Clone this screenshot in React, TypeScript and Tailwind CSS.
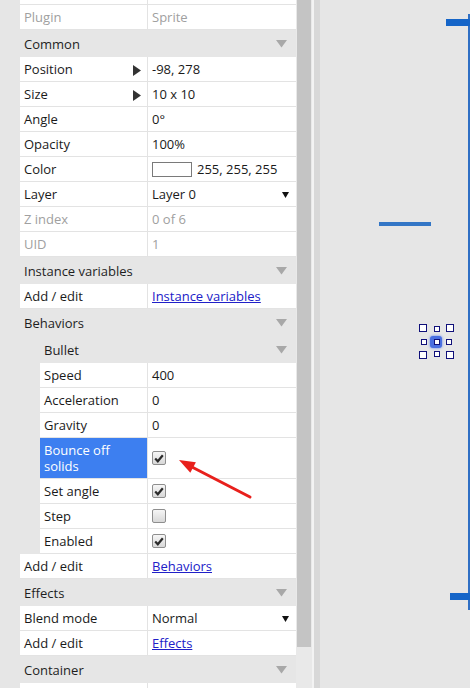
import React from "react";

const font = { fontFamily: '"Open Sans", "Noto Sans", sans-serif' };

function HeaderArrow() {
  return (
    <svg width="11" height="8" viewBox="0 0 11 8" className="shrink-0">
      <polygon points="0,0 11,0 5.5,7.5" fill="#a8a8a8" />
    </svg>
  );
}

function PlayArrow() {
  return (
    <svg width="8" height="11" viewBox="0 0 8 11" className="shrink-0">
      <polygon points="0,0 8,5.5 0,11" fill="#333" />
    </svg>
  );
}

function DropArrow() {
  return (
    <svg width="7" height="6" viewBox="0 0 7 6" className="shrink-0">
      <polygon points="0,0 7,0 3.5,6" fill="#111" />
    </svg>
  );
}

function Check({ checked }: { checked: boolean }) {
  return (
    <div className="w-[14px] h-[14px] rounded-[2px] border border-[#8e8e8e] bg-gradient-to-b from-[#f6f6f6] to-[#d8d8d8] flex items-center justify-center">
      {checked && (
        <svg width="10" height="9" viewBox="0 0 10 9">
          <path d="M1.2 4.6 L3.8 7.3 L8.8 1.2" stroke="#2a2a2a" strokeWidth="2.2" fill="none" />
        </svg>
      )}
    </div>
  );
}

function Header({ label, indent = false }: { label: string; indent?: boolean }) {
  return (
    <div className={`h-[27px] flex items-center justify-between pr-[9px] bg-[#e6e6e6] ${indent ? "pl-[24px]" : "pl-[4px]"}`}>
      <span className="text-[13px] text-[#1e1e1e] pt-[2px]">{label}</span>
      <HeaderArrow />
    </div>
  );
}

function Row({
  name,
  children,
  indent = false,
  muted = false,
  arrow = false,
  h = "h-[25px]",
  selected = false,
}: {
  name: React.ReactNode;
  children?: React.ReactNode;
  indent?: boolean;
  muted?: boolean;
  arrow?: boolean;
  h?: string;
  selected?: boolean;
}) {
  return (
    <div className={`flex ${h} ${indent ? "ml-[20px]" : ""} bg-white border-b border-[#e3e3e3]`}>
      <div
        className={`${indent ? "w-[108px]" : "w-[128px]"} shrink-0 border-r border-[#e3e3e3] flex items-center justify-between pl-[4px] pr-[6px] ${
          selected ? "bg-[#3d7ff0] text-white leading-[16px]" : muted ? "text-[#a0a0a0] pt-[2px]" : "text-[#1a1a1a] pt-[2px]"
        }`}
      >
        <span className="text-[13px]">{name}</span>
        {arrow && <PlayArrow />}
      </div>
      <div className={`flex-1 flex items-center pl-[4px] pr-[7px] text-[13px] pt-[2px] ${muted ? "text-[#a0a0a0]" : "text-[#1a1a1a]"}`}>
        {children}
      </div>
    </div>
  );
}

function Link({ children }: { children: React.ReactNode }) {
  return <span className="text-[#2020c8] underline">{children}</span>;
}

function Handle({ x, y, s }: { x: number; y: number; s: number }) {
  return (
    <div
      className="absolute border-[1.5px] border-[#10107a] bg-white"
      style={{ left: x, top: y, width: s, height: s }}
    />
  );
}

export default function App() {
  return (
    <div className="w-[470px] h-[688px] overflow-hidden flex bg-[#e6e6e6] relative" style={font}>
      {/* property panel */}
      <div className="w-[296px] shrink-0 pl-[20px] bg-[#e6e6e6] overflow-hidden">
        <div className="-mt-[20px]">
          <Row name="" />
          <Row name="Plugin" muted>
            Sprite
          </Row>
          <Header label="Common" />
          <Row name="Position" arrow>
            -98, 278
          </Row>
          <Row name="Size" arrow>
            10 x 10
          </Row>
          <Row name="Angle">0°</Row>
          <Row name="Opacity">100%</Row>
          <Row name="Color">
            <div className="w-[40px] h-[15px] border border-[#7a7a7a] bg-white mr-[5px] -mt-[2px]" />
            255, 255, 255
          </Row>
          <Row name="Layer">
            <div className="flex-1 flex items-center justify-between">
              <span>Layer 0</span>
              <DropArrow />
            </div>
          </Row>
          <Row name="Z index" muted>
            0 of 6
          </Row>
          <Row name="UID" muted>
            1
          </Row>
          <Header label="Instance variables" />
          <Row name="Add / edit">
            <Link>Instance variables</Link>
          </Row>
          <Header label="Behaviors" />
          <Header label="Bullet" indent />
          <Row name="Speed" indent>
            400
          </Row>
          <Row name="Acceleration" indent>
            0
          </Row>
          <Row name="Gravity" indent>
            0
          </Row>
          <Row
            name={
              <span className="block">
                Bounce off
                <br />
                solids
              </span>
            }
            indent
            selected
            h="h-[41px]"
          >
            <div className="-mt-[2px]">
              <Check checked />
            </div>
          </Row>
          <Row name="Set angle" indent>
            <div className="-mt-[2px]">
              <Check checked />
            </div>
          </Row>
          <Row name="Step" indent>
            <div className="-mt-[2px]">
              <Check checked={false} />
            </div>
          </Row>
          <Row name="Enabled" indent>
            <div className="-mt-[2px]">
              <Check checked />
            </div>
          </Row>
          <Row name="Add / edit">
            <Link>Behaviors</Link>
          </Row>
          <Header label="Effects" />
          <Row name="Blend mode">
            <div className="flex-1 flex items-center justify-between">
              <span>Normal</span>
              <DropArrow />
            </div>
          </Row>
          <Row name="Add / edit">
            <Link>Effects</Link>
          </Row>
          <Header label="Container" />
          <Row name="" />
        </div>
      </div>

      {/* scrollbar */}
      <div className="w-[16px] shrink-0 bg-[#e9e9e9] flex flex-col px-[1px]">
        <div className="h-[647px] bg-[#c4c4c4]" />
      </div>
      {/* separator */}
      <div className="w-[2px] shrink-0 bg-[#f3f3f3]" />
      <div className="w-[6px] shrink-0 bg-[#d8d8d8]" />

      {/* canvas */}
      <div className="flex-1 relative bg-[#e6e6e6]">
        <div className="absolute left-[148px] top-[14px] w-[2px] h-[596px] bg-[#2f6fc4]" />
        <div className="absolute left-[126px] top-[19px] w-[24px] h-[7px] bg-[#1565c8]" />
        <div className="absolute left-[59px] top-[222px] w-[52px] h-[4px] bg-[#3376c6]" />
        <div className="absolute left-[130px] top-[593px] w-[20px] h-[7px] bg-[#1565c8]" />
        {/* selection handles */}
        <div className="absolute left-[110px] top-[336px] w-[12px] h-[12px] rounded-[3px] bg-[#4a6fe0] shadow-[0_0_3px_#5a7ff0]" />
        <Handle x={99} y={324} s={8} />
        <Handle x={114} y={326} s={6} />
        <Handle x={126} y={324} s={8} />
        <Handle x={101} y={339} s={6} />
        <Handle x={114} y={339} s={6} />
        <Handle x={126} y={339} s={6} />
        <Handle x={99} y={351} s={8} />
        <Handle x={114} y={351} s={6} />
        <Handle x={126} y={351} s={8} />
      </div>

      {/* red annotation arrow */}
      <svg className="absolute left-0 top-0 pointer-events-none" width="470" height="688">
        <line x1="250" y1="497" x2="190" y2="466" stroke="#e8201c" strokeWidth="3" strokeLinecap="round" />
        <polygon points="179,460 190.3,472.8 195.9,462.2" fill="#e8201c" />
      </svg>
    </div>
  );
}
